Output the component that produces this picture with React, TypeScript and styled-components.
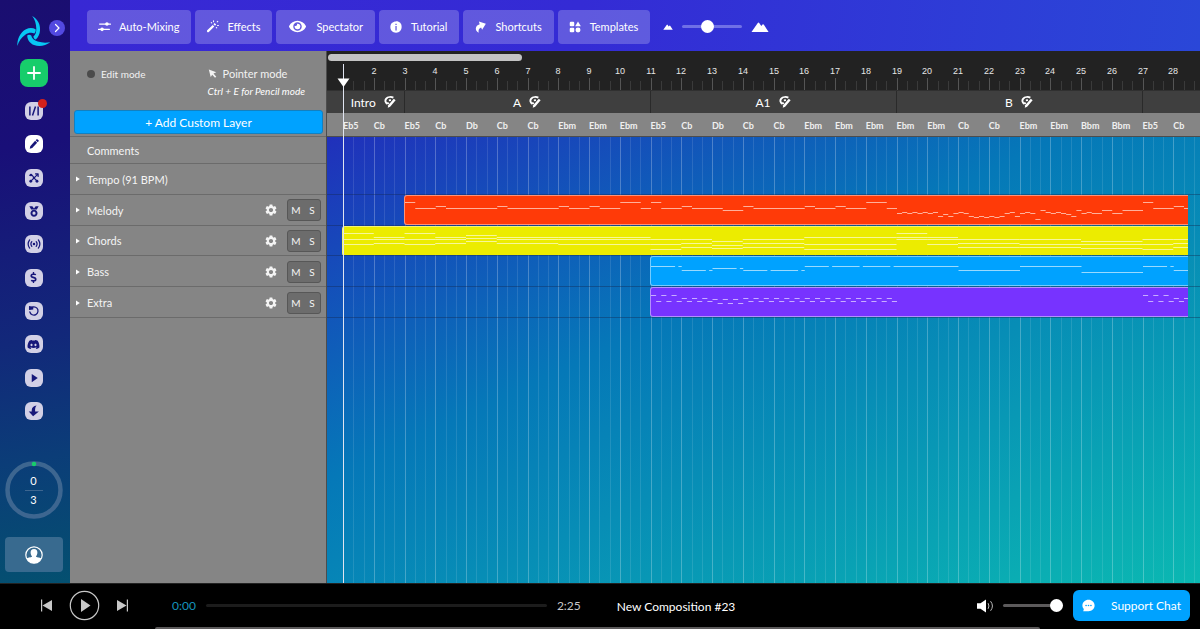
import React from "react";
import styled, { createGlobalStyle, css } from "styled-components";
import { FaDiscord, FaDollarSign, FaEye } from "react-icons/fa";
import { MdSettings } from "react-icons/md";

/* ---------- timeline scale ---------- */

const BARS = 32;
const TIMELINE_WIDTH = 984;
const BAR = TIMELINE_WIDTH / BARS;
const BEAT = BAR / 3;
const LEAD = 16;

type Note = [start: number, end: number, y: number];

const steps = (start: number, length: number, ys: number[]): Note[] =>
  ys.map((y, i) => [start + i * length, start + (i + 1) * length, y]);

const stack = (start: number, end: number, ys: number[]): Note[] =>
  ys.map((y) => [start, end, y]);

const repeat = (n: number, ys: number[]): number[] => Array.from({ length: n }, () => ys).flat();

const melody: Note[] = [
  [0, 1, 6], [1, 3, 12], [3, 4, 10], [4, 9, 12], [9, 10, 10], [10, 15, 12], [15, 16, 10],
  [16, 18, 12], [18, 19, 10], [19, 21, 12], [21, 23, 6], [23, 24, 12], [24, 25, 6],
  [25, 27, 12], [27, 28, 10], [28, 31, 12], [31, 33, 14], [33, 34, 10], [34, 39, 12],
  [39, 40, 10], [40, 42, 12], [42, 43, 10], [43, 45, 12], [45, 47, 6], [47, 48, 12],
  ...steps(48, 0.5, [
    17, 16, 17, 16, 17, 16, 17, 16, 20, 18, 20, 17, 16, 17, 20, 21, 20, 21, 20, 21, 20, 17, 16,
    20, 17, 16, 17, 23, 14, 16, 17, 16, 17, 18, 20, 14, 17, 16,
  ]),
  [67, 68, 17], [68, 69, 14], [69, 70, 17], [70, 72, 14], [72, 73, 6], [73, 75, 12],
  [75, 76, 10], [76, 81, 12],
];

const chordNotes: Note[] = [
  ...stack(0, 3, [6, 12, 17]), ...stack(3, 6, [10, 12, 16]), ...stack(6, 9, [6, 12, 17]),
  ...stack(9, 12, [10, 12, 16]), ...stack(12, 15, [8, 11, 14]), ...stack(15, 21, [10, 12, 16]),
  ...stack(21, 30, [10, 12, 17]), ...stack(30, 33, [12, 17, 22]), ...stack(33, 36, [12, 16, 20]),
  ...stack(36, 39, [14, 18, 21]), ...stack(39, 45, [12, 16, 20]), ...stack(45, 54, [10, 17, 22]),
  ...stack(54, 57, [6, 10, 12]), ...stack(57, 60, [10, 12, 17]), ...stack(60, 66, [12, 16, 20]),
  ...stack(66, 72, [12, 17, 20]), ...stack(72, 78, [14, 17, 21]), ...stack(78, 81, [12, 17, 22]),
  ...stack(81, 90, [12, 16, 20]),
];

const bass: Note[] = [
  [0, 2.35, 9], [2.67, 3, 9], [3, 5.35, 13], [5.67, 6, 13], [6, 8.35, 11], [8.67, 9, 11],
  [9, 11.35, 13], [11.67, 14.35, 13], [14.67, 15, 13], [15, 17.35, 9], [17.67, 20.35, 9],
  [20.67, 23.35, 9], [23.67, 30, 9], [30, 36, 13], [36, 42, 9], [42, 48, 15],
  [48, 50.35, 9], [50.67, 51, 9], [51, 60, 13],
];

const extra: Note[] = [
  ...steps(0, 0.5, repeat(3, [7, 13])),
  ...steps(3, 0.5, repeat(3, [10, 13])),
  ...steps(6, 0.5, repeat(3, [11, 15])),
  ...steps(9, 0.5, repeat(15, [10, 13])),
  ...steps(48, 0.5, repeat(3, [7, 13])),
  ...steps(51, 0.5, repeat(3, [10, 13])),
];

const tracks = [
  { name: "Melody", color: "#ff3a08", startBar: 3, notes: melody },
  { name: "Chords", color: "#ecec00", startBar: 1, notes: chordNotes },
  { name: "Bass", color: "#00a2ff", startBar: 11, notes: bass },
  { name: "Extra", color: "#7733ff", startBar: 11, notes: extra },
];

const sections = [
  { name: "Intro", bars: 2 },
  { name: "A", bars: 8 },
  { name: "A1", bars: 8 },
  { name: "B", bars: 8 },
  { name: "", bars: 6 },
];

const chordNames = (
  "Eb5 Cb Eb5 Cb Db Cb Cb Ebm Ebm Ebm Eb5 Cb Db Cb Cb Ebm Ebm Ebm " +
  "Ebm Ebm Cb Cb Ebm Ebm Bbm Bbm Eb5 Cb"
).split(" ");

/* ---------- base ---------- */

const GlobalStyle = createGlobalStyle`
  *, *::before, *::after { box-sizing: border-box; }
  body {
    margin: 0;
    background: #000;
    color: #fff;
    font-family: Lato, "Liberation Sans", sans-serif;
    font-size: 12px;
    overflow: hidden;
  }
  button, input { font: inherit; color: inherit; }
  button { border: 0; padding: 0; background: none; cursor: pointer; }
  ul { list-style: none; margin: 0; padding: 0; }
  svg { display: block; flex: none; }
`;

const Page = styled.div`
  display: flex;
  flex-direction: column;
  height: 100vh;
`;

const Upper = styled.div`
  display: flex;
  flex: 1;
  min-height: 0;
`;

/* ---------- left navigation ---------- */

const Sidebar = styled.nav`
  display: flex;
  flex-direction: column;
  align-items: center;
  flex: none;
  width: 70px;
  padding: 15px 3px 11px 0;
  background: linear-gradient(170deg, #1a0e70 0%, #190f78 25%, #12287a 58%, #0b3d78 78%, #045070 100%);
`;

const Brand = styled.div`
  position: relative;
  width: 34px;
  height: 32px;
`;

const ExpandButton = styled.button`
  position: absolute;
  left: 32px;
  top: 5px;
  display: grid;
  place-items: center;
  width: 16px;
  height: 16px;
  border-radius: 50%;
  background: #5249e0;
`;

const CreateButton = styled.button`
  display: grid;
  place-items: center;
  flex: none;
  width: 28px;
  height: 28px;
  margin: 12px 0 15px;
  border-radius: 8px;
  background: #17cd6b;
`;

const NavList = styled.ul`
  display: flex;
  flex-direction: column;
  justify-content: space-between;
  flex: none;
  height: 318px;
`;

const NavButton = styled.button<{ $active?: boolean }>`
  position: relative;
  display: grid;
  place-items: center;
  width: 18px;
  height: 18px;
  border-radius: 6px;
  color: #17177a;
  background: ${(p) => (p.$active ? "#fff" : "#d2d0e6")};
`;

const Badge = styled.span`
  position: absolute;
  right: -4px;
  top: -3px;
  width: 9px;
  height: 9px;
  border-radius: 50%;
  background: #d4211c;
`;

const Quota = styled.div`
  position: relative;
  display: grid;
  place-items: center;
  width: 58px;
  height: 58px;
  margin-top: auto;
  margin-bottom: 18px;
`;

const QuotaText = styled.div`
  position: absolute;
  display: flex;
  flex-direction: column;
  align-items: center;
  width: 18px;
  font-size: 11px;
  line-height: 18px;

  span + span {
    width: 100%;
    border-top: 1px solid #3d6690;
    text-align: center;
  }
`;

const AccountButton = styled.button`
  display: grid;
  place-items: center;
  flex: none;
  width: 58px;
  height: 35px;
  border-radius: 4px;
  background: #386a8f;
`;

/* ---------- toolbar ---------- */

const Main = styled.main`
  display: flex;
  flex-direction: column;
  flex: 1;
  min-width: 0;
`;

const Toolbar = styled.header`
  display: flex;
  align-items: center;
  gap: 4px;
  flex: none;
  height: 51px;
  padding: 2px 17px 0;
  background: linear-gradient(97deg, #3828d4 0%, #342bd5 45%, #2a47d8 100%);
`;

const ToolButton = styled.button`
  display: flex;
  align-items: center;
  gap: 8px;
  height: 34px;
  padding: 0 12px 0 10px;
  border-radius: 4px;
  background: rgba(255, 255, 255, 0.22);
  font-size: 11px;
  white-space: nowrap;
`;

const ToolIcon = styled.span<{ $wide?: boolean }>`
  display: grid;
  place-items: center;
  width: ${(p) => (p.$wide ? 22 : 14)}px;
`;

const Zoom = styled.label`
  display: flex;
  align-items: center;
  gap: 9px;
  margin-left: 9px;
`;

const Range = styled.input<{ $track: string; $thumb: number }>`
  appearance: none;
  width: 60px;
  height: 14px;
  margin: 0;
  background: none;

  &::-webkit-slider-runnable-track {
    height: 3px;
    border-radius: 2px;
    background: ${(p) => p.$track};
  }
  &::-webkit-slider-thumb {
    appearance: none;
    width: ${(p) => p.$thumb}px;
    height: ${(p) => p.$thumb}px;
    margin-top: -5px;
    border-radius: 50%;
    background: #fff;
  }
`;

/* ---------- editor ---------- */

const Editor = styled.div`
  display: flex;
  flex: 1;
  min-height: 0;
`;

const LayerPanel = styled.section`
  flex: none;
  width: 257px;
  border-right: 1px solid #4d4d4d;
  background: #858585;
`;

const ModeArea = styled.div`
  height: 86px;
  padding: 13px 3px 0 4px;
  border-bottom: 1px solid #6b6b6b;
`;

const Modes = styled.div`
  display: flex;
  justify-content: space-between;
  height: 46px;
  padding: 0 18px 0 13px;
`;

const Mode = styled.div`
  display: flex;
  flex-direction: column;
`;

const ModeButton = styled.button<{ $small?: boolean }>`
  display: flex;
  align-items: center;
  gap: 6px;
  height: 19px;
  font-size: ${(p) => (p.$small ? 10 : 11)}px;
  color: #f2f2f2;
`;

const Dot = styled.span`
  width: 8px;
  height: 8px;
  border-radius: 50%;
  background: #4b4b4b;
`;

const Hint = styled.em`
  font-size: 10px;
  line-height: 16px;
`;

const AddLayerButton = styled.button`
  width: 100%;
  height: 24px;
  border: 1px solid #1380c0;
  border-radius: 3px;
  background: #00a2ff;
`;

const laneRows = css`
  display: grid;
  grid-template-columns: minmax(0, 1fr);
  grid-template-rows: repeat(5, minmax(0, 1fr));
  height: 154px;
`;

const LayerRow = styled.div<{ $indent?: boolean }>`
  display: flex;
  align-items: center;
  padding: 1px 5px 0 ${(p) => (p.$indent ? 17 : 6)}px;
  border-bottom: 1px solid #6b6b6b;
  font-size: 11px;
  color: #f4f4f4;
`;

const CommentsRow = styled(LayerRow)`
  height: 27px;
`;

const LayerRows = styled.div`
  ${laneRows}
`;

const Disclosure = styled.button`
  display: flex;
  align-items: center;
  gap: 7px;
  margin-right: auto;
`;

const GearButton = styled.button`
  display: grid;
  margin-right: 9px;
`;

const MuteSolo = styled.div`
  display: grid;
  grid-template-columns: 1fr 1fr;
  width: 34px;
  height: 22px;
  border: 1px solid #575757;
  border-radius: 3px;
  background: #6c6c6c;
  font-size: 10px;
`;

/* ---------- timeline ---------- */

const Timeline = styled.section`
  position: relative;
  display: flex;
  flex-direction: column;
  flex: 1;
  min-width: 0;
  overflow: hidden;
`;

const Ruler = styled.div`
  height: 39px;
  padding-top: 3px;
  background: #222;
`;

const ScrollThumb = styled.div`
  width: 194px;
  height: 7px;
  margin-left: 1px;
  border-radius: 4px;
  background: #c3c3c3;
`;

const RulerScale = styled.svg`
  font: 9px "Liberation Sans", Arial, sans-serif;
`;

const BarGrid = styled.div`
  display: grid;
  grid-template-columns: repeat(${BARS}, 1fr);
  width: ${TIMELINE_WIDTH}px;
`;

const SectionBand = styled.div`
  height: 23px;
  padding-left: ${LEAD}px;
  border-top: 1px solid #303030;
  background: #3f3f3f;
`;

const SectionCell = styled.div<{ $bars: number }>`
  display: flex;
  align-items: center;
  justify-content: center;
  gap: 8px;
  grid-column: span ${(p) => p.$bars};
  height: 22px;
  border-right: 1px solid #2a2a2a;
`;

const SectionEdit = styled.button`
  display: grid;
`;

const ChordBand = styled.div`
  height: 24px;
  padding-left: ${LEAD}px;
  border-bottom: 1px solid #4d4d4d;
  background: #858585;
`;

const ChordCell = styled.span`
  font-size: 9px;
  font-weight: 700;
  line-height: 25px;
  color: #f0f0f0;
`;

const Canvas = styled.div`
  position: relative;
  flex: 1;
  background: linear-gradient(155deg, #2030bb 0%, #0578b8 40%, #0bb8b2 100%);
`;

const GridLines = styled.svg`
  position: absolute;
  inset: 0;
`;

const Lanes = styled.div`
  ${laneRows}
  position: relative;
  margin-top: 27px;
`;

const Lane = styled.div`
  padding: 0 12px 0 ${LEAD - 1}px;
  border-bottom: 1px solid rgba(20, 40, 80, 0.4);
`;

const LaneClips = styled.div`
  height: 100%;
  overflow: hidden;
`;

const Clip = styled.div<{ $start: number; $color: string }>`
  grid-column: ${(p) => p.$start} / -1;
  height: 30px;
  border: 1px solid rgba(255, 255, 255, 0.45);
  border-radius: 3px;
  background: ${(p) => p.$color};
  overflow: hidden;
`;

const Playhead = styled.svg`
  position: absolute;
  left: 10px;
  top: 13px;
  height: 100%;
`;

/* ---------- player ---------- */

const Player = styled.footer`
  display: flex;
  align-items: center;
  flex: none;
  position: relative;
  height: 46px;
  padding: 0 10px 2px 40px;
  border-top: 1px solid #222;
  background: #000;
`;

const Transport = styled.div`
  display: flex;
  align-items: center;
  gap: 16px;
  width: 132px;

  button { display: grid; }
`;

const Time = styled.span<{ $current?: boolean }>`
  color: ${(p) => (p.$current ? "#1593bd" : "#c8c8c8")};
`;

const Progress = styled.div`
  flex: 1;
  max-width: 341px;
  height: 3px;
  margin: 0 10px;
  border-radius: 2px;
  background: #1c1c1c;
`;

const SongTitle = styled.span`
  margin-left: 36px;
  padding-top: 2px;
`;

const Volume = styled.label`
  display: flex;
  align-items: center;
  gap: 9px;
  margin: 0 10px 0 auto;
`;

const SupportButton = styled.button`
  display: flex;
  align-items: center;
  justify-content: space-between;
  width: 117px;
  height: 31px;
  padding: 0 9px;
  border-radius: 6px;
  background: #00a2ff;
`;

const WindowEdge = styled.div`
  position: absolute;
  left: 155px;
  right: 160px;
  bottom: 0;
  height: 2px;
  border-radius: 4px 4px 0 0;
  background: #5c5a5b;
`;

/* ---------- icons ---------- */

const Icon = ({
  size = 14,
  box = 16,
  children,
}: {
  size?: number;
  box?: number;
  children: React.ReactNode;
}) => (
  <svg width={size} height={size} viewBox={`0 0 ${box} ${box}`} fill="currentColor" aria-hidden>
    {children}
  </svg>
);

const line = {
  fill: "none",
  stroke: "currentColor",
  strokeLinecap: "round" as const,
  strokeLinejoin: "round" as const,
};

const Logo = () => (
  <svg width="34" height="32" viewBox="0 0 34 32" fill="#08c8f4" aria-hidden>
    <path d="M15.200 1C20.800 4.200 23.600 9.500 23 15.500C22.700 19.200 21.200 22.300 18.800 24.600C17.400 24.300 16.500 23.200 16.400 21.600C18.600 19.800 19.400 17 19.300 13.500C19.100 8.500 18 4.500 15.200 1Z" />
    <path d="M0.300 31C0.200 24.200 2.900 17.300 9 14.200C12.300 12.600 15.700 12.700 18.600 14.200C19 15.800 18.500 17.400 17.300 18.400C14.600 17.200 11.200 17.600 8.300 19.700C4.400 22.400 1.900 26 0.300 31Z" />
    <path d="M10.200 20.400C11.300 19.500 12.900 19.600 14.200 20.500C14.800 23.300 17.200 25.500 20.700 26.500C24.900 27.800 28.800 27.900 33.300 27.200C28.500 30.800 22.400 32 17 30C13.100 28.500 10.400 25 10.200 20.400Z" />
  </svg>
);

const MixIcon = () => (
  <Icon size={13}>
    <path {...line} strokeWidth="1.600" d="M2 5H15.300M0.700 11.500H14" />
    <circle cx="11" cy="5" r="2.200" />
    <circle cx="5" cy="11.500" r="2.200" />
  </Icon>
);

const WandIcon = () => (
  <Icon size={13}>
    <path d="M1.500 12.700L8.300 6L10.200 7.900L3.500 14.700Q2.500 15.500 1.500 14.700Q.7 13.700 1.500 12.700ZM9.200 5.100L10.600 3.700L12.500 5.600L11.100 7Z" />
    <path {...line} strokeWidth="1.300" d="M9.300.9V2M13.800 2.300L14.500 1.600M14.200 6.800H15.300M6.500 3.100L7 3.600M12.700 9.200L13.200 9.800" />
  </Icon>
);

const InfoIcon = () => (
  <Icon size={12}>
    <path fillRule="evenodd" d="M8 .5C12.500 .3 15.700 3.400 15.500 8C15.400 12.500 12.500 15.600 8 15.500C3.500 15.500.4 12.500.5 8C.5 3.500 3.500.5 8 .5ZM7.200 3.500V5.300H8.900V3.500ZM7.200 6.700V12.500H8.900V6.700Z" />
  </Icon>
);

const ShareIcon = () => (
  <Icon size={12}>
    <path d="M6.500.8L15.800 3.700L10.800 11.800L9.500 8.500C6.800 9.300 5.600 11.300 6.200 15.500C.8 12.800 1.200 5.800 7.600 4.200Z" />
  </Icon>
);

const TemplateIcon = () => (
  <Icon size={12}>
    <rect x="1" y="1" width="6" height="6" rx="1.500" />
    <path d="M12 .5L15.800 7H8.200Z" />
    <rect x="1" y="9" width="6" height="6" rx="1.500" />
    <circle cx="12" cy="12" r="3.300" />
  </Icon>
);

const Mountains = ({ width, height }: { width: number; height: number }) => (
  <svg width={width} height={height} viewBox="0 0 18 10" fill="#fff" aria-hidden>
    <path d="M0.500 10L6.600 1.200Q7.500 0 8.400 1.200L10.300 4L11.500 2.600Q12.200 1.900 12.900 2.700L17.600 10Z" />
  </svg>
);

const PointerIcon = () => (
  <Icon size={9} box={9}>
    <path d="M.8.5L8.300 3.300L5.500 4.500L8.300 7.700L7 8.800L4.200 5.700L2.700 8Z" />
  </Icon>
);

const RepairIcon = () => (
  <Icon size={12}>
    <path d="M13 3.500L15.500 5.600L8.200 14.300L5 15.500L5.600 12.300Z" />
    <path {...line} strokeWidth="2.600" strokeLinecap="butt" d="M12.500 2.200C9.500.9 5 1.200 3 3.500C1.200 5.800 1.500 8.500 4.500 10.500M4.500 10.500L6.300 9M6.500 5.800L9.300 5.500" />
  </Icon>
);

const ChatIcon = () => (
  <Icon size={13}>
    <path d="M8 1C12.200 1 15.500 4 15.500 8C15.500 12 12.200 15 8 15H1.500L2.300 12.300C1.200 11.200.5 9.800.5 8C.5 4 3.800 1 8 1Z" />
    <g fill="#00a2ff">
      <circle cx="5" cy="8" r="1" />
      <circle cx="8" cy="8" r="1" />
      <circle cx="11" cy="8" r="1" />
    </g>
  </Icon>
);

const navItems: { label: string; icon: React.ReactNode; active?: boolean; badge?: boolean }[] = [
  {
    label: "Library",
    badge: true,
    icon: (
      <Icon size={12}>
        <path {...line} strokeWidth="2" strokeLinecap="butt" d="M2.500 2V14M6 14L10 2M13.500 2V14" />
      </Icon>
    ),
  },
  {
    label: "Composer",
    active: true,
    icon: (
      <Icon size={12}>
        <path d="M2.300 14.200L3 11L9.500 3.800L12.200 6.200L5.600 13.400ZM10.300 3L11.500 1.800Q12.200 1.300 12.900 1.900L14.100 3Q14.700 3.700 14.100 4.400L13 5.500Z" />
      </Icon>
    ),
  },
  {
    label: "Styles",
    icon: (
      <Icon size={12}>
        <path {...line} strokeWidth="1.600" d="M3.500 12.500L12.500 3.500M10 2.500H13.500V6M2.500 4.500H5.500L7 6.300M9.500 9.500L12 12" />
        <circle cx="4" cy="4" r="1.800" />
        <circle cx="12" cy="12.300" r="1.900" />
        <circle cx="3.700" cy="12.300" r="1.900" />
        <circle cx="8" cy="8" r="1.700" />
      </Icon>
    ),
  },
  {
    label: "Achievements",
    icon: (
      <Icon size={12}>
        <circle {...line} strokeWidth="2.600" cx="8" cy="10.900" r="3.400" />
        <path d="M1.800 1.500H5.800L8 4.500L10.200 1.500H14.200L11.800 5.900H4.200Z" />
      </Icon>
    ),
  },
  {
    label: "Radio",
    icon: (
      <Icon size={14}>
        <circle cx="8" cy="8" r="1.400" />
        <path {...line} strokeWidth="1.400" d="M5.500 5.300Q3.400 8 5.500 10.700M10.500 5.300Q12.600 8 10.500 10.700M3 3.300Q-.4 8 3 12.700M13 3.300Q16.400 8 13 12.700" />
      </Icon>
    ),
  },
  { label: "Pricing", icon: <FaDollarSign size={11} /> },
  {
    label: "History",
    icon: (
      <Icon size={12}>
        <path {...line} strokeWidth="1.700" d="M3.300 4.800A5.500 5.500 0 1 1 2.500 9.300" />
        <path d="M1.300 1.300L7 2.300V6L1.300 6.500Z" />
      </Icon>
    ),
  },
  { label: "Discord", icon: <FaDiscord size={13} /> },
  {
    label: "Videos",
    icon: (
      <Icon size={12}>
        <path d="M5 2.500V13.500L13 8Z" />
      </Icon>
    ),
  },
  {
    label: "Downloads",
    icon: (
      <Icon size={12}>
        <path d="M6.800 15L1 8.500H5V6.500C5.200 3.500 7.500 1.200 11.500.8C9.800 2.500 9.300 4.500 9.500 8.500H14.500Z" />
      </Icon>
    ),
  },
];

const tools: { label: string; icon: React.ReactNode; wide?: boolean }[] = [
  { label: "Auto-Mixing", icon: <MixIcon /> },
  { label: "Effects", icon: <WandIcon /> },
  { label: "Spectator", icon: <FaEye size={17} />, wide: true },
  { label: "Tutorial", icon: <InfoIcon /> },
  { label: "Shortcuts", icon: <ShareIcon /> },
  { label: "Templates", icon: <TemplateIcon /> },
];

/* ---------- parts ---------- */

const Navigation = () => (
  <Sidebar aria-label="Main">
    <Brand>
      <Logo />
      <ExpandButton aria-label="Expand menu">
        <Icon size={10} box={10}>
          <path {...line} strokeWidth="1.200" d="M3.500 1.500L7 5L3.500 8.500" />
        </Icon>
      </ExpandButton>
    </Brand>
    <CreateButton aria-label="Create">
      <Icon size={14} box={14}>
        <path {...line} strokeWidth="1.800" d="M7 1V13M1 7H13" />
      </Icon>
    </CreateButton>
    <NavList>
      {navItems.map((item) => (
        <li key={item.label}>
          <NavButton $active={item.active} aria-label={item.label}>
            {item.icon}
            {item.badge && <Badge />}
          </NavButton>
        </li>
      ))}
    </NavList>
    <Quota>
      <svg width="58" height="58" aria-hidden>
        <circle cx="29" cy="29" r="26.500" fill="none" stroke="#3d6690" strokeWidth="4.500" />
        <circle cx="29" cy="3" r="2.300" fill="#17cd6b" />
      </svg>
      <QuotaText>
        <span>0</span>
        <span>3</span>
      </QuotaText>
    </Quota>
    <AccountButton aria-label="Account">
      <Icon size={18} box={18}>
        <circle {...line} strokeWidth="1.200" cx="9" cy="9" r="8.200" />
        <path d="M9 3C11.300 3 12.500 4.600 12.400 6.700C12.300 8.300 11.800 9.500 10.900 10.300C11.300 11.500 14.500 11.400 16.300 12.500C14.800 15.800 12 17.200 9 17.200C6 17.200 3.200 15.800 1.700 12.500C3.500 11.400 6.700 11.500 7.100 10.300C6.200 9.500 5.700 8.300 5.600 6.700C5.500 4.600 6.700 3 9 3Z" />
      </Icon>
    </AccountButton>
  </Sidebar>
);

const Caret = () => (
  <svg width="4" height="6" viewBox="0 0 4 6" fill="#fff" aria-hidden>
    <path d="M0 0.500L3.800 3L0 5.500Z" />
  </svg>
);

const Layers = () => (
  <LayerPanel aria-label="Layers">
    <ModeArea>
      <Modes>
        <Mode>
          <ModeButton $small>
            <Dot />
            Edit mode
          </ModeButton>
        </Mode>
        <Mode>
          <ModeButton>
            <PointerIcon />
            Pointer mode
          </ModeButton>
          <Hint>Ctrl + E for Pencil mode</Hint>
        </Mode>
      </Modes>
      <AddLayerButton>+ Add Custom Layer</AddLayerButton>
    </ModeArea>
    <CommentsRow $indent>Comments</CommentsRow>
    <LayerRows>
      <LayerRow>
        <Disclosure>
          <Caret />
          Tempo (91 BPM)
        </Disclosure>
      </LayerRow>
      {tracks.map((track) => (
        <LayerRow key={track.name}>
          <Disclosure>
            <Caret />
            {track.name}
          </Disclosure>
          <GearButton aria-label={`${track.name} settings`}>
            <MdSettings size={14} />
          </GearButton>
          <MuteSolo>
            <button aria-label={`Mute ${track.name}`}>M</button>
            <button aria-label={`Solo ${track.name}`}>S</button>
          </MuteSolo>
        </LayerRow>
      ))}
    </LayerRows>
  </LayerPanel>
);

const beats = Array.from({ length: BARS * 3 }, (_, i) => i);

const NoteRoll = ({ notes }: { notes: Note[] }) => (
  <svg width={TIMELINE_WIDTH} height="28" aria-hidden>
    {notes.map(([start, end, y], i) => (
      <rect
        key={i}
        x={start * BEAT}
        y={y}
        width={(end - start) * BEAT}
        height="1"
        fill="#fff"
        fillOpacity="0.600"
      />
    ))}
  </svg>
);

const Arrangement = () => (
  <Timeline aria-label="Timeline">
    <Ruler>
      <ScrollThumb />
      <RulerScale width={LEAD + TIMELINE_WIDTH} height="29">
        {beats.slice(1).map((beat) => {
          const x = Math.round(LEAD + beat * BEAT);
          const major = beat % 3 === 0;
          const bar = beat / 3 + 1;
          return (
            <g key={beat}>
              <rect x={x} y={major ? 17 : 20} width="1" height={major ? 12 : 9} fill={major ? "#555" : "#3a3a3a"} />
              {major && bar <= chordNames.length && (
                <text x={x} y="13" textAnchor="middle" fill="#e6e6e6">
                  {bar}
                </text>
              )}
            </g>
          );
        })}
      </RulerScale>
    </Ruler>
    <SectionBand>
      <BarGrid>
        {sections.map((section, i) => (
          <SectionCell key={i} $bars={section.bars}>
            {section.name && (
              <>
                {section.name}
                <SectionEdit aria-label={`Edit section ${section.name}`}>
                  <RepairIcon />
                </SectionEdit>
              </>
            )}
          </SectionCell>
        ))}
      </BarGrid>
    </SectionBand>
    <ChordBand>
      <BarGrid>
        {chordNames.map((name, i) => (
          <ChordCell key={i}>{name}</ChordCell>
        ))}
      </BarGrid>
    </ChordBand>
    <Canvas>
      <GridLines width="100%" height="100%" aria-hidden>
        {beats.map((beat) => (
          <rect
            key={beat}
            x={Math.round(LEAD + beat * BEAT)}
            y="0"
            width="1"
            height="100%"
            fill="#fff"
            fillOpacity={beat % 3 === 0 ? 0.25 : 0.11}
          />
        ))}
      </GridLines>
      <Lanes>
        <Lane />
        {tracks.map((track) => (
          <Lane key={track.name}>
            <LaneClips>
              <BarGrid>
                <Clip $start={track.startBar} $color={track.color}>
                  <NoteRoll notes={track.notes} />
                </Clip>
              </BarGrid>
            </LaneClips>
          </Lane>
        ))}
      </Lanes>
    </Canvas>
    <Playhead width="13" aria-hidden>
      <rect x="6" y="0" width="1" height="100%" fill="#e0e4f0" />
      <path d="M0.500 14.500H12.500L6.500 23Z" fill="#fff" />
    </Playhead>
  </Timeline>
);

const PlayerBar = () => (
  <Player>
    <Transport>
      <button aria-label="Previous">
        <svg width="13" height="13" viewBox="0 0 13 13" fill="#c8c8c8">
          <path d="M1 .5H2.200V12.500H1ZM2.500 6.500L12 1V12Z" />
        </svg>
      </button>
      <button aria-label="Play">
        <svg width="31" height="31" viewBox="0 0 31 31" fill="#c8c8c8">
          <circle cx="15.500" cy="15.500" r="14.200" fill="none" stroke="#c8c8c8" strokeWidth="1.200" />
          <path d="M12 9L21.500 15.500L12 22Z" />
        </svg>
      </button>
      <button aria-label="Next">
        <svg width="13" height="13" viewBox="0 0 13 13" fill="#c8c8c8">
          <path d="M10.800 .5H12V12.500H10.800ZM10.500 6.500L1 1V12Z" />
        </svg>
      </button>
    </Transport>
    <Time $current>0:00</Time>
    <Progress role="progressbar" aria-label="Position" aria-valuenow={0} />
    <Time>2:25</Time>
    <SongTitle>New Composition #23</SongTitle>
    <Volume>
      <svg width="17" height="14" viewBox="0 0 17 14" fill="#fff" aria-hidden>
        <path d="M0 4.300H3.500L9 0.500V13.500L3.500 9.700H0Z" />
        <path {...line} stroke="#bbb" d="M11.300 4.500Q12.800 7 11.300 9.500M13.800 2.500Q17.300 7 13.800 11.500" />
      </svg>
      <Range type="range" aria-label="Volume" defaultValue={100} $track="#5c5a5b" $thumb={13} />
    </Volume>
    <SupportButton>
      <ChatIcon />
      Support Chat
    </SupportButton>
    <WindowEdge />
  </Player>
);

export default function App() {
  return (
    <Page>
      <GlobalStyle />
      <Upper>
        <Navigation />
        <Main>
          <Toolbar>
            {tools.map((tool) => (
              <ToolButton key={tool.label}>
                <ToolIcon $wide={tool.wide}>{tool.icon}</ToolIcon>
                {tool.label}
              </ToolButton>
            ))}
            <Zoom>
              <Mountains width={10} height={6} />
              <Range type="range" aria-label="Zoom" defaultValue={40} $track="#6f70e6" $thumb={13} />
              <Mountains width={18} height={10} />
            </Zoom>
          </Toolbar>
          <Editor>
            <Layers />
            <Arrangement />
          </Editor>
        </Main>
      </Upper>
      <PlayerBar />
    </Page>
  );
}
